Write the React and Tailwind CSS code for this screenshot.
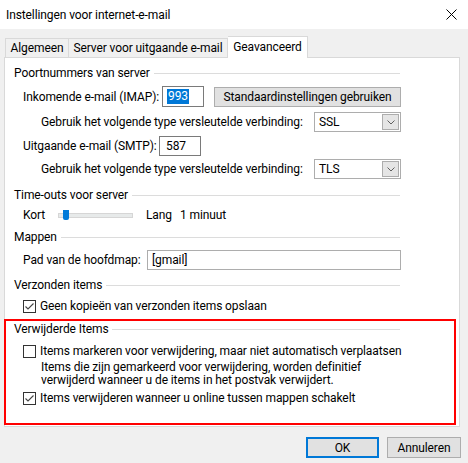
import React from 'react';

function GroupHeader({ title, width = 395, pl = 9, className = '' }) {
    return (
        <div className={`flex items-center h-[16px] ${className}`} style={{ width, paddingLeft: pl }}>
            <span className="whitespace-nowrap">{title}</span>
            <div className="flex-1 h-px bg-[#dcdcdc] ml-[4px]"></div>
        </div>
    );
}

function Checkbox({ checked }) {
    return (
        <div className="w-[13px] h-[13px] border border-[#333333] bg-white flex items-center justify-center shrink-0">
            {checked && (
                <svg width="11" height="11" viewBox="0 0 11 11">
                    <polyline points="1.5,5.5 4,8 9.5,2.5" fill="none" stroke="#444444" strokeWidth="1.1" />
                </svg>
            )}
        </div>
    );
}

function Combo({ value }) {
    return (
        <div className="w-[87px] h-[20px] border border-[#adadad] bg-white flex items-center justify-between pl-[4px] pr-px shrink-0">
            <span>{value}</span>
            <div className="w-[17px] h-[16px] bg-[#e5e5e5] border border-[#adadad] flex items-center justify-center">
                <svg width="8" height="5" viewBox="0 0 8 5">
                    <polyline points="0.5,0.5 4,4 7.5,0.5" fill="none" stroke="#606060" strokeWidth="1" />
                </svg>
            </div>
        </div>
    );
}

export default function App() {
    return (
        <div className="w-[468px] h-[463px] bg-[#f0f0f0] text-[12px] tracking-[-0.1px] text-black overflow-hidden font-['Segoe_UI','Roboto',sans-serif]">
            {/* title bar */}
            <div className="h-[29px] bg-white flex items-center justify-between pl-[6px] pr-[11px]">
                <span className="text-[12px]">Instellingen voor internet-e-mail</span>
                <svg width="11" height="11" viewBox="0 0 11 11">
                    <line x1="0.5" y1="0.5" x2="10.5" y2="10.5" stroke="#000" strokeWidth="1" />
                    <line x1="10.5" y1="0.5" x2="0.5" y2="10.5" stroke="#000" strokeWidth="1" />
                </svg>
            </div>

            {/* tabs */}
            <div className="h-[28px] pl-[5px] flex items-end whitespace-nowrap">
                <div className="w-[64px] h-[19px] border border-b-0 border-[#d9d9d9] flex items-center justify-center">Algemeen</div>
                <div className="w-[159px] h-[19px] border-t border-r border-[#d9d9d9] flex items-center justify-center">Server voor uitgaande e-mail</div>
                <div className="relative z-10 -mb-px w-[80px] h-[22px] bg-white border border-b-0 border-[#d9d9d9] border-l-0 flex items-center justify-center pb-[2px]">Geavanceerd</div>
            </div>

            {/* panel */}
            <div className="ml-[4px] w-[456px] h-[370px] bg-white border border-[#d9d9d9] pt-px">
                <GroupHeader title="Poortnummers van server" className="mt-[6px]" />

                <div className="flex items-center h-[21px] mt-[5px] pl-[18px]">
                    <span className="w-[139px] whitespace-nowrap">Inkomende e-mail (IMAP):</span>
                    <div className="w-[42px] h-[21px] border border-[#7a7a7a] flex items-center pl-[4px]">
                        <span className="bg-[#0078d7] text-white leading-[15px] px-px">993</span>
                    </div>
                    <div className="ml-[10px] w-[187px] h-[20px] bg-[#e1e1e1] border border-[#adadad] flex items-center justify-center whitespace-nowrap">
                        Standaardinstellingen gebruiken
                    </div>
                </div>

                <div className="flex items-center h-[20px] mt-[5px] pl-[36px]">
                    <span className="w-[273px] whitespace-nowrap">Gebruik het volgende type versleutelde verbinding:</span>
                    <Combo value="SSL" />
                </div>

                <div className="flex items-center h-[20px] mt-[4px] pl-[18px]">
                    <span className="w-[136px] whitespace-nowrap">Uitgaande e-mail (SMTP):</span>
                    <div className="w-[42px] h-[20px] border border-[#7a7a7a] flex items-center pl-[6px]">587</div>
                </div>

                <div className="flex items-center h-[20px] mt-[3px] pl-[36px]">
                    <span className="w-[273px] whitespace-nowrap">Gebruik het volgende type versleutelde verbinding:</span>
                    <Combo value="TLS" />
                </div>

                <GroupHeader title="Time-outs voor server" className="mt-[8px]" />

                <div className="flex items-center h-[16px] mt-[4px] pl-[18px]">
                    <span className="w-[35px]">Kort</span>
                    <div className="relative w-[75px] h-[5px] bg-[#e7eaea] border border-[#d6d6d6]">
                        <div className="absolute left-[4px] top-[-4px] w-[6px] h-[10px] bg-[#007ad9] rounded-b-[2px]"></div>
                    </div>
                    <span className="ml-[13px] w-[34px]">Lang</span>
                    <span>1 minuut</span>
                </div>

                <GroupHeader title="Mappen" className="mt-[6px]" />

                <div className="flex items-center h-[20px] mt-[5px] pl-[18px]">
                    <span className="w-[124px] whitespace-nowrap">Pad van de hoofdmap:</span>
                    <div className="w-[254px] h-[20px] border border-[#adadad] flex items-center pl-[4px]">[gmail]</div>
                </div>

                <GroupHeader title="Verzonden items" className="mt-[7px]" />

                <div className="flex items-center h-[16px] mt-[5px] pl-[18px]">
                    <Checkbox checked />
                    <span className="ml-[4px] whitespace-nowrap">Geen kopieën van verzonden items opslaan</span>
                </div>

                {/* highlighted group */}
                <div className="mt-[5px] -ml-[1px] w-[452px] h-[106px] border-2 border-[#ff0000]">
                    <GroupHeader title="Verwijderde Items" width={394} pl={8} />

                    <div className="flex items-center h-[16px] mt-[6px] pl-[17px]">
                        <Checkbox />
                        <span className="ml-[4px] whitespace-nowrap">Items markeren voor verwijdering, maar niet automatisch verplaatsen</span>
                    </div>

                    <div className="mt-[2px] pl-[35px] leading-[13px]">
                        <div>Items die zijn gemarkeerd voor verwijdering, worden definitief</div>
                        <div>verwijderd wanneer u de items in het postvak verwijdert.</div>
                    </div>

                    <div className="flex items-center h-[16px] mt-[3px] pl-[17px]">
                        <Checkbox checked />
                        <span className="ml-[4px] whitespace-nowrap">Items verwijderen wanneer u online tussen mappen schakelt</span>
                    </div>
                </div>
            </div>

            {/* buttons */}
            <div className="mt-[10px] flex justify-end gap-[8px] pr-[7px]">
                <div className="w-[73px] h-[21px] bg-[#e1e1e1] border-2 border-[#0078d7] flex items-center justify-center">OK</div>
                <div className="w-[74px] h-[21px] bg-[#e1e1e1] border border-[#adadad] flex items-center justify-center">Annuleren</div>
            </div>
        </div>
    );
}
